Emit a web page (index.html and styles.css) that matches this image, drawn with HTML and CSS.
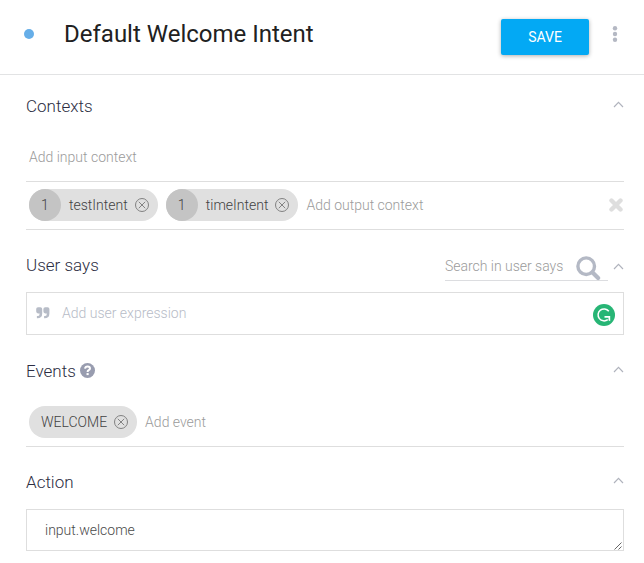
FILE: index.html
```html
<!DOCTYPE html>
<html lang="en">
<head>
<meta charset="utf-8">
<title>Default Welcome Intent</title>
<link rel="stylesheet" href="styles.css">
</head>
<body>
<svg class="defs" width="0" height="0" aria-hidden="true">
  <symbol id="chevron" viewBox="0 0 11 7"><path d="M1 6 5.5 1.3 10 6" fill="none" stroke="currentColor" stroke-width="1.2"/></symbol>
  <symbol id="remove" viewBox="0 0 14 14"><g fill="none" stroke="currentColor" stroke-width=".9"><circle cx="7" cy="7" r="6.5"/><path d="M3.8 3.8l6.4 6.4M10.2 3.8l-6.4 6.4"/></g></symbol>
</svg>
<header class="header">
  <span class="status"></span>
  <h1 class="title">Default Welcome Intent</h1>
  <button class="save">SAVE</button>
  <svg class="more" width="6" height="18" viewBox="0 0 6 18" fill="#b4b8c3"><circle cx="3" cy="3.300" r="2.200"/><circle cx="3" cy="9" r="2.200"/><circle cx="3" cy="14.700" r="2.200"/></svg>
</header>
<main class="content">
  <section>
    <div class="head head-contexts"><h2>Contexts</h2><svg class="chevron"><use href="#chevron"/></svg></div>
    <div class="row row-input"><span class="hint">Add input context</span></div>
    <div class="row row-output">
      <span class="chip"><span class="count">1</span><span class="name">testIntent</span><svg class="remove"><use href="#remove"/></svg></span>
      <span class="chip"><span class="count">1</span><span class="name">timeIntent</span><svg class="remove"><use href="#remove"/></svg></span>
      <span class="hint">Add output context</span>
      <svg class="clear" width="14" height="14" viewBox="0 0 14 14"><path d="M2.500 2.500l9 9M11.500 2.500l-9 9" stroke="#dedede" stroke-width="4.400" stroke-linecap="round"/></svg>
    </div>
  </section>
  <section>
    <div class="head head-says">
      <h2>User says</h2>
      <div class="search"><span>Search in user says</span><svg width="25" height="25" viewBox="0 0 25 25" fill="none" stroke="#b4b9c5"><circle cx="10.200" cy="10.200" r="8.300" stroke-width="3.400"/><path d="M16.800 16.800l5.300 5.300" stroke-width="4.200" stroke-linecap="round"/></svg></div>
      <svg class="chevron"><use href="#chevron"/></svg>
    </div>
    <div class="box box-says">
      <svg class="quote" width="14" height="12" viewBox="0 0 14 12" fill="#b7bcc7"><path d="M2 .2h2.400Q6.200.2 6.200 2v4.500q0 4.800-4.800 4.800H.9V9.100h.5q2.200 0 2.200-2.200v-.5H2Q.2 6.400.2 4.600V2Q.2.2 2 .2z"/><path transform="translate(7.200)" d="M2 .2h2.400Q6.200.2 6.200 2v4.500q0 4.800-4.800 4.800H.9V9.100h.5q2.200 0 2.200-2.200v-.5H2Q.2 6.400.2 4.600V2Q.2.2 2 .2z"/></svg>
      <span class="expression">Add user expression</span>
      <svg class="badge" width="22" height="22" viewBox="0 0 22 22"><circle cx="11" cy="11" r="11" fill="#27b575"/><path d="M15.800 7.200A6 6 0 1 0 14.800 15.600" fill="none" stroke="#fff" stroke-width="1.500"/><path d="M11.500 12.100H17.200V17.200L15.500 16.200V13.700H11.500z" fill="#fff"/></svg>
    </div>
  </section>
  <section>
    <div class="head head-events"><h2>Events</h2>
      <svg class="help" width="15" height="15" viewBox="0 0 14 14"><circle cx="7" cy="7" r="7" fill="#989caf"/><path d="M4.700 5.200Q5 3.300 7.100 3.300 9.300 3.300 9.300 5.100 9.300 6.100 8.100 6.700 7.100 7.200 7.100 8.300" fill="none" stroke="#fff" stroke-width="1.900"/><path d="M6.100 9.400H8.100V11.300H6.100z" fill="#fff"/></svg>
      <svg class="chevron"><use href="#chevron"/></svg></div>
    <div class="row row-events">
      <span class="chip chip-plain"><span class="name">WELCOME</span><svg class="remove"><use href="#remove"/></svg></span>
      <span class="hint">Add event</span>
    </div>
  </section>
  <section>
    <div class="head head-action"><h2>Action</h2><svg class="chevron"><use href="#chevron"/></svg></div>
    <div class="box box-action"><span>input.welcome</span><svg class="grip" width="8" height="8" viewBox="0 0 8 8" stroke="#555" stroke-width=".9"><path d="M.5 7.500l7-7M4.500 7.500l3-3"/></svg></div>
  </section>
</main>
</body>
</html>
```
FILE: styles.css
```css
* { box-sizing: border-box; }
body {
  margin: 0;
  background: #fff;
  font: 300 14px/20px Roboto, sans-serif;
  color: #555;
}
svg { display: block; flex: none; }
.defs { position: absolute; }
h1, h2 { margin: 0; }
.header {
  display: flex;
  height: 75px;
  padding: 0 26px 0 24px;
  border-bottom: 1px solid #e2e3e4;
}
.status {
  width: 10px;
  height: 10px;
  margin: 29px 30px 0 0;
  border-radius: 50%;
  background: #66aee8;
}
.title {
  padding-top: 18px;
  font-size: 24px;
  line-height: 32px;
  font-weight: 400;
  color: #212121;
}
.save {
  width: 88px;
  height: 36px;
  margin: 19px 23px 0 auto;
  padding: 0;
  border: 0;
  border-radius: 2px;
  background: #03a9f4;
  box-shadow: 0 1px 4px rgba(0, 0, 0, .32);
  color: #fff;
  font: 400 14px/36px Roboto, sans-serif;
}
.more { margin-top: 25px; }
.content { padding: 0 20px 0 26px; }
.head { display: flex; }
.head h2 {
  font-size: 17px;
  line-height: 22px;
  font-weight: 300;
  color: #2b2d42;
}
.head-contexts { height: 58px; padding-top: 20px; }
.head-says { height: 62px; padding-top: 24px; }
.head-events { height: 63px; padding-top: 25px; }
.head-action { height: 62px; padding-top: 24px; }
.chevron {
  width: 11px;
  height: 7px;
  margin: 6px 0 0 auto;
  color: #b0b3bd;
}
.row {
  display: flex;
  align-items: center;
  border-bottom: 1px solid #dedede;
  padding-left: 3px;
}
.row-input { height: 49px; }
.row-output { height: 48px; padding-bottom: 1px; }
.row-events { height: 49px; }
.hint { color: #9b9b9b; }
.chip {
  display: flex;
  align-items: center;
  height: 32px;
  margin-right: 8px;
  padding-right: 9px;
  border-radius: 16px;
  background: #e0e0e0;
  color: #424242;
}
.chip-plain { padding-left: 12px; }
.count {
  width: 32px;
  margin-right: 8px;
  border-radius: 50%;
  background: #c4c4c4;
  line-height: 32px;
  text-align: center;
}
.remove { width: 14px; height: 14px; margin-left: 7px; color: #777; }
.clear { margin-left: auto; margin-right: 1px; }
.search {
  display: flex;
  width: 163px;
  height: 27px;
  margin-left: auto;
  border-bottom: 1px solid #dcdde0;
  color: #9b9b9b;
}
.search span { padding-top: 2px; letter-spacing: -.02px; }
.search svg { margin: 2px 7px 0 auto; }
.search + .chevron { margin: 9px 0 0 5px; }
.box { display: flex; border: 1px solid #dedede; }
.box-says { height: 43px; padding: 0 8px 0 9px; }
.quote { margin-top: 14px; }
.expression { margin: 10px 0 0 12px; color: #b7bcc7; }
.badge { margin: 11px 0 0 auto; }
.help { margin: 3px 0 0 4px; }
.box-action { height: 42px; padding-left: 18px; color: #4a4a4a; }
.box-action span { margin-top: 10px; }
.grip { margin: 32px 1px 0 auto; }
```
